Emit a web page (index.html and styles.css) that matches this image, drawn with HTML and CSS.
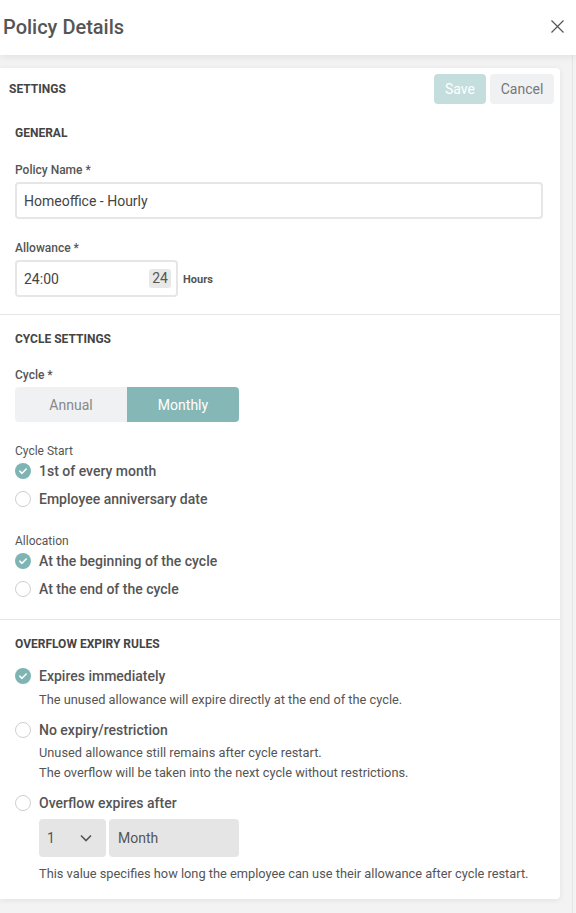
FILE: index.html
```html
<!DOCTYPE html>
<html lang="en">
<head>
  <meta charset="UTF-8">
  <meta name="viewport" content="width=device-width, initial-scale=1.0">
  <title>Policy Details</title>
  <link rel="stylesheet" href="styles.css">
</head>
<body>
  <div class="header">
    <h1>Policy Details</h1>
    <button class="close" aria-label="Close">
      <svg width="13" height="13" viewBox="0 0 13 13"><path d="M0.5 0.5 L12.5 12.5 M12.5 0.5 L0.5 12.5" stroke="#555" stroke-width="1.2" fill="none"/></svg>
    </button>
  </div>

  <div class="content">
    <div class="card">
      <div class="toolbar">
        <span class="toolbar-title">SETTINGS</span>
        <div class="actions">
          <button class="btn btn-save">Save</button>
          <button class="btn btn-cancel">Cancel</button>
        </div>
      </div>

      <!-- general -->
      <div class="section section-general">
        <div class="section-title">GENERAL</div>
        <label class="field-label">Policy Name *</label>
        <div class="input input-wide">Homeoffice - Hourly</div>
        <label class="field-label">Allowance *</label>
        <div class="allowance-row">
          <div class="input input-small">
            <span>24:00</span>
            <span class="badge">24</span>
          </div>
          <span class="unit">Hours</span>
        </div>
      </div>

      <!-- cycle -->
      <div class="section section-cycle">
        <div class="section-title">CYCLE SETTINGS</div>
        <label class="field-label">Cycle *</label>
        <div class="segmented">
          <div class="seg">Annual</div>
          <div class="seg seg-active">Monthly</div>
        </div>

        <div class="group-label">Cycle Start</div>
        <div class="radios">
          <div class="radio checked"><span class="dot"></span>1st of every month</div>
          <div class="radio"><span class="dot"></span>Employee anniversary date</div>
        </div>

        <div class="group-label group-gap">Allocation</div>
        <div class="radios">
          <div class="radio checked"><span class="dot"></span>At the beginning of the cycle</div>
          <div class="radio"><span class="dot"></span>At the end of the cycle</div>
        </div>
      </div>

      <!-- overflow -->
      <div class="section section-overflow">
        <div class="section-title">OVERFLOW EXPIRY RULES</div>
        <div class="rule rule-first">
          <div class="radio checked"><span class="dot"></span>Expires immediately</div>
          <p class="hint">The unused allowance will expire directly at the end of the cycle.</p>
        </div>
        <div class="rule">
          <div class="radio"><span class="dot"></span>No expiry/restriction</div>
          <p class="hint hint-tight">Unused allowance still remains after cycle restart.<br>The overflow will be taken into the next cycle without restrictions.</p>
        </div>
        <div class="rule">
          <div class="radio"><span class="dot"></span>Overflow expires after</div>
          <div class="selects">
            <div class="select select-num">
              <span>1</span>
              <svg width="12" height="8" viewBox="0 0 12 8"><path d="M1 1.5 L6 6.5 L11 1.5" stroke="#555" stroke-width="1.6" fill="none"/></svg>
            </div>
            <div class="select select-unit">Month</div>
          </div>
          <p class="hint hint-last">This value specifies how long the employee can use their allowance after cycle restart.</p>
        </div>
      </div>
    </div>
    <div class="rail"></div>
  </div>
</body>
</html>
```

FILE: styles.css
```css
body {
  margin: 0;
  background-color: #f3f3f3;
  font-family: Roboto, "Liberation Sans", sans-serif;
  color: #555;
}
.header {
  display: flex;
  justify-content: space-between;
  align-items: center;
  height: 55px;
  padding: 0 12px 0 3px;
  background-color: #fff;
  box-shadow: 0 2px 8px rgba(0, 0, 0, 0.08);
  position: relative;
}
h1 {
  margin: 0 0 1px;
  font-size: 20px;
  font-weight: 500;
  color: #555;
}
.close {
  border: none;
  background: none;
  padding: 0;
  width: 13px;
  height: 13px;
  display: flex;
  margin-top: -3px;
}
.content {
  display: flex;
  padding-top: 13px;
}
.card {
  width: 560px;
  background-color: #fff;
  border-radius: 0 4px 4px 0;
  box-shadow: 0 1px 6px rgba(0, 0, 0, 0.08);
  margin-bottom: 14px;
}
.rail {
  width: 1px;
  margin-left: 12px;
  margin-top: -13px;
  background-color: #e4e4e4;
}
.toolbar {
  display: flex;
  justify-content: space-between;
  align-items: center;
  padding: 6px 6px 0 9px;
}
.toolbar-title {
  font-size: 12px;
  font-weight: 700;
  color: #444;
}
.actions {
  display: flex;
  gap: 4px;
}
.btn {
  height: 30px;
  border: none;
  border-radius: 4px;
  font-family: inherit;
  font-size: 14px;
  padding: 0;
}
.btn-save {
  width: 52px;
  background-color: #c4dddd;
  color: #fff;
}
.btn-cancel {
  width: 64px;
  background-color: #f0f1f3;
  color: #777;
}
.section {
  padding: 16px 15px 17px;
  border-bottom: 1px solid #e6e6e6;
}
.section-general {
  padding-top: 21px;
}
.section-cycle {
  padding-bottom: 20px;
}
.section-overflow {
  border-bottom: none;
  padding-bottom: 15px;
}
.section-title {
  font-size: 12px;
  font-weight: 700;
  line-height: 16px;
  color: #444;
}
.field-label {
  display: block;
  margin-top: 21px;
  font-size: 12px;
  font-weight: 500;
  line-height: 16px;
  color: #555;
}
.section-cycle .field-label {
  margin-top: 20px;
}
.input {
  box-sizing: border-box;
  height: 37px;
  margin-top: 4px;
  border: 2px solid #e6e6e6;
  border-radius: 4px;
  padding: 0 7px;
  display: flex;
  align-items: center;
  font-size: 14px;
  color: #444;
}
.input-wide {
  width: 528px;
}
.allowance-row {
  display: flex;
  align-items: center;
  gap: 5px;
}
.input-small {
  width: 163px;
  justify-content: space-between;
  padding-right: 5px;
}
.badge {
  background-color: #e8e8e8;
  border-radius: 3px;
  padding: 1px 3px;
  line-height: 17px;
  color: #555;
}
.unit {
  margin-top: 5px;
  font-size: 11px;
  font-weight: 700;
  color: #555;
}
.segmented {
  display: flex;
  width: 224px;
  height: 35px;
  margin-top: 4px;
  border-radius: 4px;
  overflow: hidden;
}
.seg {
  flex: 1;
  display: flex;
  align-items: center;
  justify-content: center;
  background-color: #f0f1f3;
  color: #888;
  font-size: 14px;
}
.seg-active {
  background-color: #86b7b7;
  color: #fff;
}
.group-label {
  margin-top: 21px;
  font-size: 12px;
  line-height: 16px;
  color: #555;
}
.group-gap {
  margin-top: 24px;
}
.radios {
  display: flex;
  flex-direction: column;
  gap: 8px;
  margin-top: 2px;
}
.radio {
  display: flex;
  align-items: center;
  gap: 8px;
  font-size: 14px;
  font-weight: 500;
  line-height: 20px;
  color: #555;
}
.dot {
  box-sizing: border-box;
  width: 16px;
  height: 16px;
  border-radius: 50%;
  border: 1.5px solid #cfcfcf;
  background-color: #fff;
}
.checked .dot {
  border: none;
  background-color: #7fb4b4;
  background-image: url("data:image/svg+xml,%3Csvg xmlns='http://www.w3.org/2000/svg' width='16' height='16' viewBox='0 0 16 16'%3E%3Cpath d='M4.8 8.2 L7 10.3 L11.2 6' stroke='white' stroke-width='1.6' fill='none' stroke-linecap='round' stroke-linejoin='round'/%3E%3C/svg%3E");
}
.rule {
  margin-top: 10px;
}
.rule-first {
  margin-top: 14px;
}
.hint {
  margin: 4px 0 0 24px;
  font-size: 12.8px;
  line-height: 20px;
  color: #555;
}
.hint-tight {
  margin-top: 3px;
}
.hint-last {
  margin-top: 7px;
}
.selects {
  display: flex;
  gap: 3px;
  margin: 6px 0 0 24px;
}
.select {
  box-sizing: border-box;
  height: 38px;
  border-radius: 4px;
  background-color: #e5e5e5;
  display: flex;
  align-items: center;
  font-size: 14px;
  color: #555;
}
.select-num {
  width: 67px;
  padding: 0 14px 0 8px;
  justify-content: space-between;
}
.select-unit {
  width: 130px;
  padding-left: 9px;
}
```
